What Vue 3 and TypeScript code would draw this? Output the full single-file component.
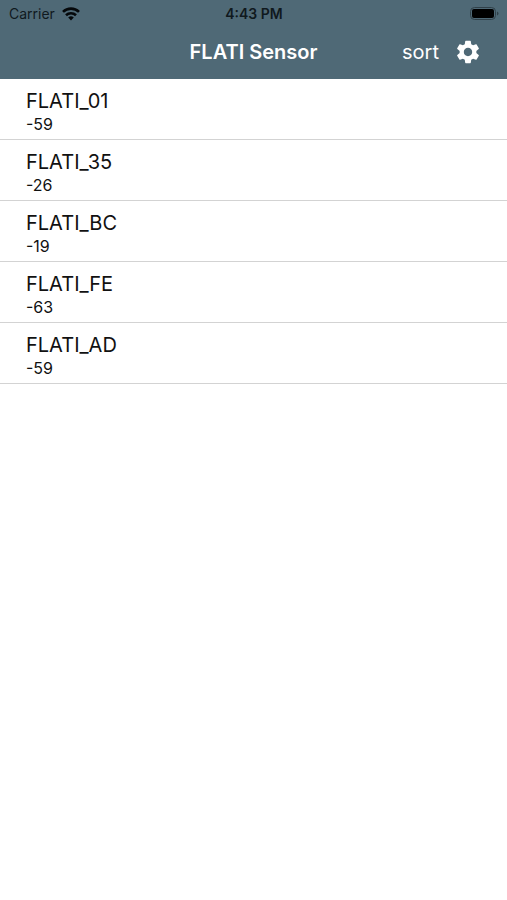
<script setup lang="ts">
interface Sensor {
  name: string
  rssi: number
}

const sensors: Sensor[] = [
  { name: 'FLATI_01', rssi: -59 },
  { name: 'FLATI_35', rssi: -26 },
  { name: 'FLATI_BC', rssi: -19 },
  { name: 'FLATI_FE', rssi: -63 },
  { name: 'FLATI_AD', rssi: -59 },
]
</script>

<template>
  <div class="screen">
    <header class="header">
      <div class="status">
        <div class="carrier">
          <span>Carrier</span>
          <svg class="wifi" viewBox="0 0 18 14" aria-hidden="true">
            <path d="M1 4.9a11.4 11.4 0 0 1 16 0" />
            <path d="M4 8.2a7.2 7.2 0 0 1 10 0" />
            <path class="dot" d="M9 13.4 6.2 10.6a4 4 0 0 1 5.6 0z" />
          </svg>
        </div>
        <div class="clock">4:43 PM</div>
        <div class="power">
          <svg class="battery" viewBox="0 0 29 14" aria-hidden="true">
            <rect class="shell" x="0.5" y="0.5" width="25" height="12" rx="4" />
            <rect x="2" y="2" width="22" height="9" rx="2" />
            <path class="cap" d="M27 4.5v4q1.5-.6 1.5-2T27 4.5z" />
          </svg>
        </div>
      </div>
      <div class="nav">
        <h1 class="title">FLATI Sensor</h1>
        <div class="actions">
          <button class="sort" type="button">sort</button>
          <button class="settings" type="button" aria-label="Settings">
            <svg viewBox="0 0 24 24" aria-hidden="true">
              <path
                d="M19.14 12.94c.04-.3.06-.61.06-.94 0-.32-.02-.64-.07-.94l2.03-1.58c.18-.14.23-.41.12-.61l-1.92-3.32c-.12-.22-.37-.29-.59-.22l-2.39.96c-.5-.38-1.03-.7-1.62-.94l-.36-2.54c-.04-.24-.24-.41-.48-.41h-3.84c-.24 0-.43.17-.47.41l-.36 2.54c-.59.24-1.13.57-1.62.94l-2.39-.96c-.22-.08-.47 0-.59.22L2.74 8.87c-.12.21-.08.47.12.61l2.03 1.58c-.05.3-.09.63-.09.94s.02.64.07.94l-2.03 1.58c-.18.14-.23.41-.12.61l1.92 3.32c.12.22.37.29.59.22l2.39-.96c.5.38 1.03.7 1.62.94l.36 2.54c.05.24.24.41.48.41h3.84c.24 0 .44-.17.47-.41l.36-2.54c.59-.24 1.13-.56 1.62-.94l2.39.96c.22.08.47 0 .59-.22l1.92-3.32c.12-.22.07-.47-.12-.61l-2.01-1.58zM12 15.6c-1.98 0-3.6-1.62-3.6-3.6s1.62-3.6 3.6-3.6 3.6 1.62 3.6 3.6-1.62 3.6-3.6 3.6z"
              />
            </svg>
          </button>
        </div>
      </div>
    </header>
    <ul class="list">
      <li v-for="sensor in sensors" :key="sensor.name" class="row">
        <span class="name">{{ sensor.name }}</span>
        <span class="rssi">{{ sensor.rssi }}</span>
      </li>
    </ul>
  </div>
</template>

<style>
body {
  background: #fff;
}
</style>

<style scoped>
.screen {
  font-family: Inter, Roboto, 'Liberation Sans', sans-serif;
  color: #111;
}

.header {
  background: #4f6976;
}

.status,
.nav {
  display: grid;
  grid-template-columns: 1fr auto 1fr;
  align-items: center;
}

.status {
  height: 27px;
  padding: 0 8px 0 9px;
  font-size: 14px;
  line-height: 20px;
  color: #10191e;
}

.carrier {
  display: flex;
  align-items: center;
  gap: 7px;
}

.wifi {
  width: 18px;
  height: 14px;
  fill: none;
  stroke: #05080a;
  stroke-width: 2.6;
}

.wifi .dot {
  fill: #05080a;
  stroke: none;
}

.clock {
  font-weight: 600;
}

.power {
  display: flex;
  justify-content: flex-end;
}

.battery {
  width: 29px;
  height: 14px;
  fill: #000;
}

.battery .shell {
  fill: none;
  stroke: #304049;
}

.battery .cap {
  fill: #304049;
}

.nav {
  height: 52px;
  padding: 0 25px 2px;
  color: #fff;
}

.title {
  grid-column: 2;
  margin: 0;
  font-size: 20px;
  line-height: 24px;
  font-weight: 600;
}

.actions {
  display: flex;
  align-items: center;
  justify-content: flex-end;
  gap: 15px;
}

.nav,
.status {
  box-sizing: border-box;
}

button {
  padding: 0;
  border: 0;
  background: none;
  color: inherit;
  font: inherit;
  cursor: pointer;
}

.sort {
  font-size: 20px;
  line-height: 24px;
}

.settings svg {
  display: block;
  width: 28px;
  height: 28px;
  fill: #fff;
}

.list {
  margin: 0;
  padding: 0;
  list-style: none;
}

.row {
  display: flex;
  flex-direction: column;
  padding: 9px 26px 4px;
  border-bottom: 1px solid #d3d3d3;
}

.name {
  font-size: 20px;
  line-height: 26px;
}

.rssi {
  font-size: 16px;
  line-height: 21px;
}
</style>
